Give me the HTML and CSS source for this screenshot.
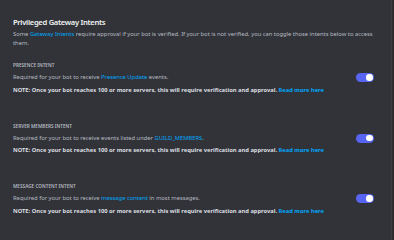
FILE: index.html
```html
<!DOCTYPE html>
<html lang="en">
<head>
    <meta charset="UTF-8">
    <meta name="viewport" content="width=device-width, initial-scale=1.0">
    <title>Privileged Gateway Intents</title>
    <link rel="stylesheet" href="styles.css">
</head>
<body>

    <div class="page">
        <div class="content">
            <h2 class="title">Privileged Gateway Intents</h2>
            <p class="intro">Some <a href="#">Gateway Intents</a> require approval if your bot is verified. If your bot is not verified, you can toggle those intents below to access them.</p>

            <div class="intent">
                <h5 class="intent-label">Presence Intent</h5>
                <div class="intent-row">
                    <p class="intent-desc">Required for your bot to receive <a href="#">Presence Update</a> events.</p>
                    <span class="switch"><span class="knob"></span></span>
                </div>
                <p class="note">NOTE: Once your bot reaches 100 or more servers, this will require verification and approval. <a href="#">Read more here</a></p>
            </div>

            <div class="intent">
                <h5 class="intent-label">Server Members Intent</h5>
                <div class="intent-row">
                    <p class="intent-desc">Required for your bot to receive events listed under <a href="#">GUILD_MEMBERS</a>.</p>
                    <span class="switch"><span class="knob"></span></span>
                </div>
                <p class="note">NOTE: Once your bot reaches 100 or more servers, this will require verification and approval. <a href="#">Read more here</a></p>
            </div>

            <div class="intent">
                <h5 class="intent-label">Message Content Intent</h5>
                <div class="intent-row">
                    <p class="intent-desc">Required for your bot to receive <a href="#">message content</a> in most messages.</p>
                    <span class="switch"><span class="knob"></span></span>
                </div>
                <p class="note">NOTE: Once your bot reaches 100 or more servers, this will require verification and approval. <a href="#">Read more here</a></p>
            </div>
        </div>
        <div class="scrollbar"></div>
    </div>

</body>
</html>
```

FILE: styles.css
```css
body {
    margin: 0;
    background: #313338;
    font-family: "Noto Sans", sans-serif;
    color: #b5bac1;
}
.page {
    display: flex;
    height: 240px;
    overflow: hidden;
}
.content {
    flex: 1;
    padding: 17px 17px 0 13px;
}
.scrollbar {
    width: 2px;
    background: #2b2d31;
    border-left: 1px solid #3a3c42;
}
a {
    color: #00a8fc;
    text-decoration: none;
}
.title {
    margin: 0;
    font-size: 7.6px;
    font-weight: 600;
    letter-spacing: -0.3px;
    line-height: 11px;
    color: #f2f3f5;
}
.intro {
    margin: 2px 0 0;
    font-size: 5.8px;
    line-height: 8.5px;
}
.intent {
    margin-top: 15px;
}
.intent + .intent {
    margin-top: 28px;
}
.intent-label {
    margin: 0;
    font-size: 4.7px;
    font-weight: 600;
    line-height: 7px;
    text-transform: uppercase;
    color: #b5bac1;
}
.intent-row {
    display: flex;
    justify-content: space-between;
    align-items: center;
    margin-top: 4px;
}
.intent-desc {
    margin: 0;
    font-size: 5.8px;
    line-height: 9px;
}
.note {
    margin: 3.5px 0 0;
    font-size: 5.75px;
    font-weight: 700;
    line-height: 9px;
    color: #dbdee1;
}
.switch {
    display: flex;
    justify-content: flex-end;
    align-items: center;
    width: 18px;
    height: 9px;
    padding: 0 1.5px;
    box-sizing: border-box;
    border-radius: 5px;
    background: #5865f2;
}
.knob {
    width: 6.5px;
    height: 6.5px;
    border-radius: 50%;
    background: #fff;
}
```
